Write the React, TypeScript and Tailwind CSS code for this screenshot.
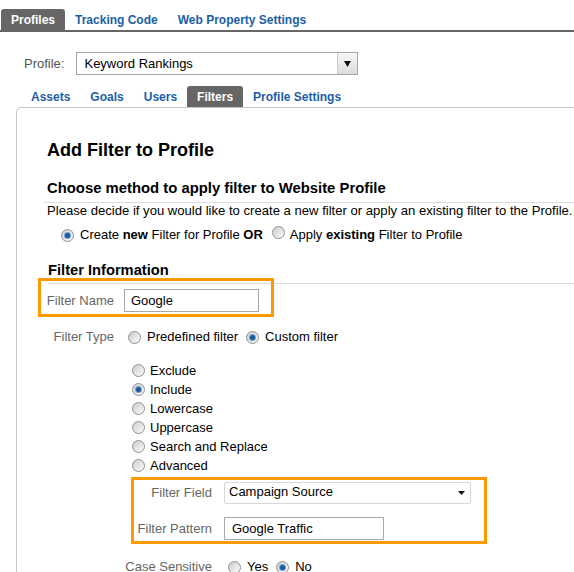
import React from 'react'

function Radio({ checked = false }: { checked?: boolean }) {
    return (
        <span className="inline-flex h-[13px] w-[13px] shrink-0 items-center justify-center rounded-full border border-[#8f9090] bg-linear-to-br from-[#cdcdcd] to-[#fbfbfb]">
            {checked && <span className="h-[5px] w-[5px] rounded-full bg-[#1d5a99] ring-1 ring-[#6fa3d8]" />}
        </span>
    )
}

function Tab({ label, active = false }: { label: string; active?: boolean }) {
    return (
        <div
            className={
                active
                    ? 'flex h-[21px] items-center rounded-t-[3px] bg-[#666] px-[10px] text-[12px] font-bold text-white'
                    : 'flex h-[21px] items-center px-[10px] text-[12px] font-bold text-[#1c5ea8]'
            }
        >
            {label}
        </div>
    )
}

export default function App() {
    return (
        <div className="relative h-[572px] w-[574px] overflow-hidden bg-white font-['Liberation_Sans',Arial,sans-serif] text-[13px] text-black">
            {/* Top tabs */}
            <div className="flex h-[32px] items-end border-b-2 border-[#666] pl-[1px]">
                <Tab label="Profiles" active />
                <Tab label="Tracking Code" />
                <Tab label="Web Property Settings" />
            </div>

            {/* Profile select */}
            <div className="mt-[20px] flex h-[23px] items-center pl-[24px]">
                <span className="mr-[12px] text-[#555]">Profile:</span>
                <div className="flex h-[23px] w-[282px] border border-[#a5a5a5]">
                    <div className="flex-1 pl-[7px] leading-[21px]">Keyword Rankings</div>
                    <div className="flex w-[20px] items-center justify-center border-l border-[#c9c9c9] bg-linear-to-b from-[#f7f7f7] to-[#dcdcdc]">
                        <svg width="7" height="6" viewBox="0 0 7 6">
                            <path d="M0 0h7L3.5 6z" fill="#111" />
                        </svg>
                    </div>
                </div>
            </div>

            {/* Sub tabs */}
            <div className="mt-[11px] flex h-[21px] items-end pl-[21px]">
                <Tab label="Assets" />
                <Tab label="Goals" />
                <Tab label="Users" />
                <Tab label="Filters" active />
                <Tab label="Profile Settings" />
            </div>

            {/* Panel */}
            <div className="ml-[16px] h-[600px] w-[600px] rounded-tl-[5px] border-l border-t border-[#c6c6c6]">
                <h1 className="mt-[31px] pl-[30px] text-[18px] font-bold leading-[22px]">Add Filter to Profile</h1>

                <h2 className="mt-[18px] ml-[27px] border-b border-[#dcdcdc] pb-[5px] pl-[3px] text-[14.85px] font-bold leading-[18px]">
                    Choose method to apply filter to Website Profile
                </h2>
                <p className="pl-[30px] text-[13.1px] leading-[16px]">
                    Please decide if you would like to create a new filter or apply an existing filter to the Profile.
                </p>
                <div className="mt-[8px] flex h-[16px] items-center pl-[44px]">
                    <Radio checked />
                    <span className="ml-[6px]">
                        Create <b>new</b> Filter for Profile <b>OR</b>
                    </span>
                    <span className="ml-[9px]">
                        <Radio />
                    </span>
                    <span className="ml-[5px]">
                        Apply <b>existing</b> Filter to Profile
                    </span>
                </div>

                <h2 className="mt-[18px] ml-[31px] border-b border-[#dcdcdc] pb-[4px] text-[14.7px] font-bold leading-[18px]">
                    Filter Information
                </h2>

                {/* Filter name */}
                <div className="mt-[5px] flex h-[23px] items-center">
                    <span className="w-[97px] text-right text-[#666]">Filter Name</span>
                    <div className="ml-[10px] h-[23px] w-[135px] border border-[#a8a8a8] pl-[6px] leading-[21px]">Google</div>
                </div>

                {/* Filter type */}
                <div className="mt-[17px] flex h-[16px] items-center">
                    <span className="w-[97px] text-right text-[#666]">Filter Type</span>
                    <span className="ml-[14px] flex">
                        <Radio />
                    </span>
                    <span className="ml-[6px]">Predefined filter</span>
                    <span className="ml-[8px] flex">
                        <Radio checked />
                    </span>
                    <span className="ml-[6px]">Custom filter</span>
                </div>

                <div className="mt-[16px] flex flex-col pl-[115px]">
                    {['Exclude', 'Include', 'Lowercase', 'Uppercase', 'Search and Replace', 'Advanced'].map((o) => (
                        <div key={o} className="flex h-[19px] items-center">
                            <Radio checked={o === 'Include'} />
                            <span className="ml-[5px]">{o}</span>
                        </div>
                    ))}
                </div>

                {/* Filter field */}
                <div className="mt-[7px] flex h-[22px] items-center">
                    <span className="w-[195px] text-right text-[#666]">Filter Field</span>
                    <div className="ml-[12px] flex h-[22px] w-[247px] items-center justify-between rounded-[2px] border border-[#d8d8d8] pb-[3px] pl-[4px] pr-[5px]">
                        <span>Campaign Source</span>
                        <svg width="7" height="4" viewBox="0 0 7 4" className="mt-[3px]">
                            <path d="M0 0h7L3.5 4z" fill="#111" />
                        </svg>
                    </div>
                </div>

                <div className="mt-[13px] flex h-[23px] items-center">
                    <span className="w-[195px] text-right text-[#666]">Filter Pattern</span>
                    <div className="ml-[12px] h-[23px] w-[160px] border border-[#a8a8a8] pl-[7px] leading-[21px]">Google Traffic</div>
                </div>

                <div className="mt-[19px] flex h-[16px] items-center">
                    <span className="w-[195px] text-right text-[#666]">Case Sensitive</span>
                    <span className="ml-[16px] flex">
                        <Radio />
                    </span>
                    <span className="ml-[6px]">Yes</span>
                    <span className="ml-[8px] flex">
                        <Radio checked />
                    </span>
                    <span className="ml-[6px]">No</span>
                </div>
            </div>

            {/* Highlight boxes */}
            <div className="absolute left-[38px] top-[278px] h-[39px] w-[236px] border-[3px] border-[#ff9900]" />
            <div className="absolute left-[131px] top-[477px] h-[67px] w-[356px] border-[3px] border-[#ff9900]" />
        </div>
    )
}
